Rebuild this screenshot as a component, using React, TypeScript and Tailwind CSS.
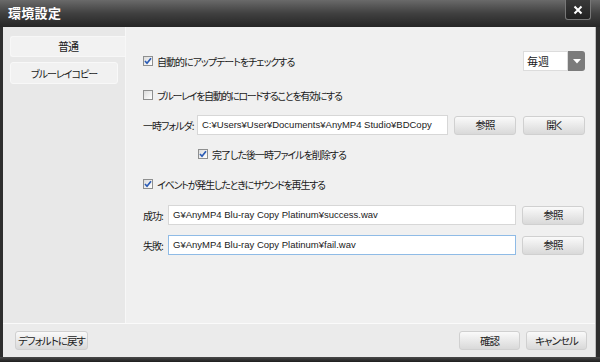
import React from "react";

const jp = "font-['Noto_Sans_CJK_JP',sans-serif] [font-feature-settings:'palt']";
const path = "font-['Liberation_Sans',sans-serif] text-[9.5px] tracking-[0px] whitespace-nowrap";

function Check({ checked }: { checked: boolean }) {
  return (
    <span className="inline-flex w-[10px] h-[10px] border border-[#8e8f8f] bg-gradient-to-br from-[#dcdcdc] to-white items-center justify-center shrink-0">
      {checked && (
        <svg width="8" height="8" viewBox="0 0 8 8">
          <path d="M1 4 L3 6.2 L7 1.2" stroke="#2a5bb5" strokeWidth="1.7" fill="none" />
        </svg>
      )}
    </span>
  );
}

function Btn({ children, className = "" }: { children: React.ReactNode; className?: string }) {
  return (
    <div
      className={`flex items-center justify-center h-[19px] rounded-[3px] border border-[#d0d0d0] bg-gradient-to-b from-[#fafafa] to-[#d9d9d9] text-[#222] text-[10.5px] whitespace-nowrap shrink-0 ${className}`}
    >
      {children}
    </div>
  );
}

function Row({ children, className = "" }: { children: React.ReactNode; className?: string }) {
  return <div className={`flex items-center whitespace-nowrap ${className}`}>{children}</div>;
}

export default function App() {
  return (
    <div className={`w-[600px] h-[362px] flex flex-col bg-[#2e2e2e] ${jp} text-[10px] tracking-[-1px] text-[#1a1a1a] overflow-hidden`}>
      {/* Title bar */}
      <div className="h-[27px] flex items-center justify-between bg-gradient-to-b from-[#6a6a6a] via-[#404040] to-[#262626] pl-[8px] pr-[9px] shrink-0">
        <span className="text-white text-[13px] font-bold tracking-[0.3px] mt-[-2px]">環境設定</span>
        <div className="self-start w-[26px] h-[20px] rounded-b-[3px] border border-t-0 border-[#777] bg-gradient-to-b from-[#3a3a3a] to-[#222] flex items-center justify-center">
          <svg width="10" height="10" viewBox="0 0 10 10">
            <path d="M1.5 1.5 L8.5 8.5 M8.5 1.5 L1.5 8.5" stroke="#fff" strokeWidth="2" />
          </svg>
        </div>
      </div>

      {/* Body */}
      <div className="flex-1 flex flex-col ml-[3px] mr-[4px] bg-[#ececec] border-r border-[#bdbdbd]">
        <div className="flex-1 flex border-b border-[#fafafa]">
          {/* Sidebar */}
          <div className="w-[122px] bg-[#e8e8e8] pt-[9px] pl-[7px] flex flex-col gap-[5px] shrink-0">
            <div className="h-[21px] flex items-center justify-center bg-[#f2f2f2] rounded-l-[3px] border border-r-0 border-[#f7f7f7] text-[11px]">
              普通
            </div>
            <div className="h-[22px] mr-[7px] flex items-center justify-center bg-[#f1f1f1] rounded-[3px] border border-[#f8f8f8] whitespace-nowrap">
              ブルーレイコピー
            </div>
          </div>
          {/* Content */}
          <div className="flex-1 bg-[#f0f0f0] border-l border-[#f7f7f7] pl-[17px] pr-[9px] pt-[23px] flex flex-col">
            <Row className="justify-between h-[22px]">
              <div className="flex items-center gap-[4px]">
                <Check checked />
                <span>自動的にアップデートをチェックする</span>
              </div>
              <div className="flex h-[20px] w-[62px] mr-[1px]">
                <div className="flex-1 bg-white border border-[#dcdcdc] flex items-center pl-[3px] text-[11px] tracking-normal">毎週</div>
                <div className="w-[17px] bg-[#7b7b7b] rounded-r-[3px] flex items-center justify-center">
                  <svg width="8" height="5" viewBox="0 0 8 5">
                    <path d="M0 0 L8 0 L4 4.5 Z" fill="#fff" />
                  </svg>
                </div>
              </div>
            </Row>
            <Row className="gap-[4px] h-[20px] mt-[13px]">
              <Check checked={false} />
              <span className="tracking-[-1.3px]">ブルーレイを自動的にロードすることを有効にする</span>
            </Row>
            <Row className="h-[20px] mt-[10px]">
              <span className="w-[54px] shrink-0">一時フォルダ:</span>
              <div className={`w-[251px] shrink-0 h-[20px] bg-white border border-[#d7d7d7] flex items-center pl-[4px] ${path}`}>
                C:¥Users¥User¥Documents¥AnyMP4 Studio¥BDCopy
              </div>
              <Btn className="w-[62px] ml-[6px]">参照</Btn>
              <Btn className="w-[62px] ml-[7px]">開く</Btn>
            </Row>
            <Row className="gap-[4px] h-[20px] mt-[9px] pl-[55px]">
              <Check checked />
              <span>完了した後一時ファイルを削除する</span>
            </Row>
            <Row className="gap-[4px] h-[20px] mt-[10px]">
              <Check checked />
              <span className="tracking-[-1.2px]">イベントが発生したときにサウンドを再生する</span>
            </Row>
            <Row className="h-[20px] mt-[11px]">
              <span className="w-[25px] shrink-0">成功:</span>
              <div className={`w-[348px] shrink-0 h-[20px] bg-white border border-[#d7d7d7] flex items-center pl-[4px] ${path}`}>
                G¥AnyMP4 Blu-ray Copy Platinum¥success.wav
              </div>
              <Btn className="w-[62px] ml-[6px]">参照</Btn>
            </Row>
            <Row className="h-[20px] mt-[10px]">
              <span className="w-[25px] shrink-0">失敗:</span>
              <div className={`w-[348px] shrink-0 h-[20px] bg-white border border-[#8fbbe6] flex items-center pl-[4px] ${path}`}>
                G¥AnyMP4 Blu-ray Copy Platinum¥fail.wav
              </div>
              <Btn className="w-[62px] ml-[6px]">参照</Btn>
            </Row>
          </div>
        </div>
        {/* Bottom bar */}
        <div className="h-[33px] shrink-0 flex items-center justify-between pl-[12px] pr-[8px] bg-[#ebebeb]">
          <Btn className="w-[73px]">デフォルトに戻す</Btn>
          <div className="flex gap-[6px]">
            <Btn className="w-[61px]">確認</Btn>
            <Btn className="w-[61px]">キャンセル</Btn>
          </div>
        </div>
      </div>
      <div className="h-[5px] shrink-0 bg-gradient-to-b from-[#4a4a4a] to-[#1e1e1e]" />
    </div>
  );
}
